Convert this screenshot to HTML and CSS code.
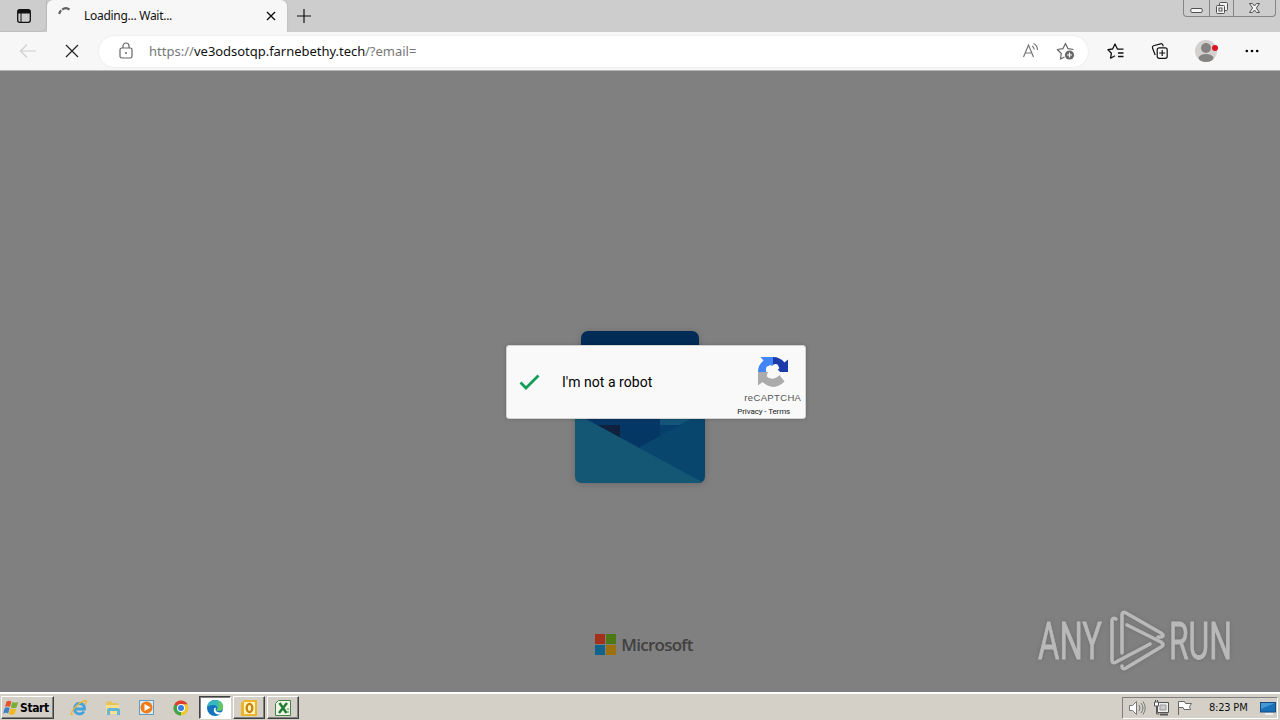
FILE: index.html
```html
<!DOCTYPE html>
<html lang="en">
  <head>
    <meta charset="UTF-8" />
    <meta name="viewport" content="width=device-width, initial-scale=1.0" />
    <title>Loading... Wait...</title>
    <link rel="stylesheet" href="styles.css">
  </head>
  <body>
    <header class="tab-bar">
      <div class="tab-menu">
        <svg width="16" height="16" viewBox="0 0 16 16"><rect x="1.7" y="1.7" width="12.6" height="12.6" rx="2" fill="none" stroke="#111" stroke-width="1.3"/><path d="M2 2h12v3.500H2z" fill="#111"/><path d="M5 5v9" stroke="#111"/></svg>
      </div>
      <div class="tab">
        <svg class="spinner" width="16" height="16" viewBox="0 0 16 16"><path d="M2.200 7A6 6 0 0 1 4.200 3.400M5.200 2.600A6 6 0 0 1 12.500 2.600" fill="none" stroke="#606060" stroke-width="2.200"/></svg>
        <span class="tab-title">Loading... Wait...</span>
        <svg class="tab-close" width="10" height="10" viewBox="0 0 10 10"><path d="M1 1l8 8M9 1L1 9" stroke="#111" stroke-width="1.4"/></svg>
      </div>
      <svg class="new-tab" width="16" height="16" viewBox="0 0 16 16"><path d="M8 1v14M1 8h14" stroke="#111" stroke-width="1.2"/></svg>
      <div class="window-buttons">
        <span class="min"><svg width="13" height="16" viewBox="0 0 13 16"><rect x=".8" y="8.5" width="11.4" height="4" rx="1.2" fill="#f5f5f5" stroke="#505050"/></svg></span>
        <span class="max"><svg width="14" height="16" viewBox="0 0 14 16"><g fill="#f2f2f2" stroke="#505050"><rect x="4.500" y="2.500" width="8" height="8" rx="1"/><rect x="1.500" y="5.500" width="8" height="8" rx="1"/><rect x="4" y="8" width="3" height="3"/></g></svg></span>
        <span class="close"><svg width="13" height="16" viewBox="0 0 13 16"><path d="M1.500 3.500h3l2 2.500 2-2.500h3L8.400 8l3.100 4.500h-3l-2-2.500-2 2.500h-3L4.600 8z" fill="#f2f2f2" stroke="#505050"/></svg></span>
      </div>
    </header>

    <nav class="toolbar">
      <svg class="back" width="18" height="16" viewBox="0 0 18 16"><path d="M17 8H2M8 1.500L1.500 8 8 14.500" fill="none" stroke="#cfcfcf" stroke-width="1.200"/></svg>
      <svg class="stop" width="14" height="14" viewBox="0 0 14 14"><path d="M1 1l12 12M13 1L1 13" stroke="#222" stroke-width="1.200"/></svg>
      <div class="address">
        <svg class="lock" width="14" height="18" viewBox="0 0 14 18"><g fill="none" stroke="#666" stroke-width="1.200"><rect x="1" y="6" width="12" height="10" rx="1.800"/><path d="M4 6V4a3 3 0 0 1 6 0v2"/></g><circle cx="7" cy="11" r="1" fill="#666"/></svg>
        <span class="url"><span class="dim scheme">https://</span><span class="host">ve3odsotqp.farnebethy.tech</span><span class="dim query">/?email=</span></span>
        <svg class="read-aloud" width="18" height="18" viewBox="0 0 18 18"><g fill="none" stroke="#777" stroke-width="1.200"><path d="M1.500 15L6.500 3l5 12M3.400 11h6.200M10 4q2 1 2.200 3.500M11.500 1.500q4 2 4 6.500"/></g></svg>
        <svg class="star-add" width="20" height="20" viewBox="0 0 20 20"><path d="M8.500 16l-4 2 .800-5.500-4-4 5.600-.800L9.500 2.500 12 7.700l5.500.800" fill="none" stroke="#666" stroke-width="1.200" stroke-linejoin="round"/><circle cx="13.500" cy="14" r="4.600" fill="#666"/><path d="M13.500 11.500v5M11 14h5" stroke="#fff" stroke-width="1.200"/></svg>
      </div>
      <svg class="favorites" width="18" height="18" viewBox="0 0 18 18"><path d="M16.500 7.200H10.500L8 2 5.600 7l-4.600.7 3.400 3.500-.8 5 4.400-2.400M11 11h5.500M11 14.500h5.500" fill="none" stroke="#111" stroke-width="1.300" stroke-linejoin="round"/></svg>
      <svg class="collections" width="18" height="18" viewBox="0 0 18 18"><g fill="none" stroke="#111" stroke-width="1.200"><path d="M4.200 13L1.500 6q-.6-1.600 1-2.300l7-1.900q1.800-.4 2.400 1.300l.3 1.200"/><rect x="6.200" y="5.800" width="10" height="10.500" rx="2"/><path d="M11.200 8v6M8.200 11h6"/></g></svg>
      <svg class="profile" width="24" height="24" viewBox="0 0 24 24"><circle cx="11" cy="12" r="11" fill="#d2d1d0"/><circle cx="11" cy="9" r="5" fill="#858381"/><ellipse cx="11" cy="19" rx="7.500" ry="4" fill="#858381"/><circle cx="20" cy="9" r="3" fill="#dc1423"/></svg>
      <svg class="more" width="14" height="4" viewBox="0 0 14 4"><circle cx="1.800" cy="2" r="1.300"/><circle cx="7" cy="2" r="1.300"/><circle cx="12.200" cy="2" r="1.300"/></svg>
    </nav>

    <main class="page">
      <svg class="outlook" width="130" height="152" viewBox="0 0 130 152">
        <rect x="6" y="0" width="118" height="110" rx="7" fill="#002c55"/>
        <path d="M10 88h76v30H10z" fill="#063766"/>
        <path d="M85 82h39v30H85z" fill="#145579"/>
        <path d="M10 94h35v20H10z" fill="#10213e"/>
        <path d="M45 94h40v24H45z" fill="#053765"/>
        <path d="M85 94h35v20H85z" fill="#063f6c"/>
        <path d="M65 116l65-36v65q0 7-7 7H60z" fill="#09466e"/>
        <path d="M0 82l127 69q-1 1-4 1H7q-7 0-7-7z" fill="#145775"/>
      </svg>

      <div class="captcha">
        <svg class="check" width="22" height="18" viewBox="0 0 22 18"><path d="M1.500 9.500L7 15 19.500 2.500" fill="none" stroke="#0f9d58" stroke-width="2.800"/></svg>
        <span class="captcha-label">I'm not a robot</span>
        <div class="brand">
          <svg class="captcha-logo" width="32" height="32" viewBox="0 0 32 32">
            <path d="M16 1q7 0 11.500 5.500L31 3.500V16H18.500l4-4q-2-3-6.500-3z" fill="#1c3aa9"/>
            <path d="M16 1v9l-3-1q-4 2-4 7H1q0-7 5.500-11.500L3.500 1z" fill="#4285f4"/>
            <path d="M1 16h12.500l-4 4q6 6 13-1l5 6.500Q17 36 5.500 26L1 29.500z" fill="#ababab"/>
            <g fill="#f9f9f9"><circle cx="16" cy="16" r="5"/><circle cx="18.500" cy="11" r="3"/><circle cx="12" cy="13" r="3"/><circle cx="20" cy="17" r="3"/><circle cx="13" cy="19" r="3"/></g>
          </svg>
          <span class="brand-name">reCAPTCHA</span>
          <span class="brand-links">Privacy - Terms</span>
        </div>
      </div>

      <div class="microsoft">
        <div class="ms-squares"><i class="red"></i><i class="green"></i><i class="blue"></i><i class="yellow"></i></div>
        <span>Microsoft</span>
      </div>

      <svg class="watermark" width="220" height="80" viewBox="0 0 220 80">
        <text x="2" y="54" textLength="64" lengthAdjust="spacingAndGlyphs">ANY</text>
        <text x="133" y="54" textLength="63" lengthAdjust="spacingAndGlyphs">RUN</text>
        <g fill="none" stroke="#b9b9b9" stroke-width="3.600" stroke-linejoin="round" stroke-linecap="round">
          <path d="M80 14q-4-2-4 2v39q0 4 4 2l34-18"/>
          <path d="M86 48V10q0-4 4-2l35 20q4 3 0 4l-3 0"/>
          <path d="M91 20l34 17q4 3 0 5L90 63q-4 2-4-2"/>
        </g>
      </svg>
    </main>

    <footer class="taskbar">
      <button class="start">
        <svg width="16" height="16" viewBox="0 0 16 16"><path d="M3.500 1.500q2.500-1.500 5 0L7 7q-2.500-1.500-5 0z" fill="#e7542c"/><path d="M9.300 2q3 1.500 6 0L13.500 7.500q-3 1.500-5.700 0z" fill="#76ae3a"/><path d="M1.700 8q2.500-1.500 5 0l-1.500 5.500q-2.500-1.500-5 0z" fill="#3f82c8"/><path d="M7.500 8.500q3 1.500 5.700 0l-1.500 5.500q-3 1.500-5.700 0z" fill="#f4b719"/></svg>
        <span>Start</span>
      </button>
      <div class="quick">
        <svg width="18" height="18" viewBox="0 0 18 18"><path d="M14 12.500Q11.500 16 7.500 14.500 4 13 4.500 9q1-4.500 5-4.500 5 0 5 5.500H5" fill="none" stroke="#42a3de" stroke-width="2.800"/><path d="M3 15q-4 2 0-4Q9 3 15 1.500q3 0 0 4" fill="none" stroke="#edb62c" stroke-width="1.300"/></svg>
        <svg width="18" height="18" viewBox="0 0 18 18"><path d="M2 3l5-1 2 2h5l1 4H2z" fill="#e7c35c"/><path d="M2 6h13v9H2z" fill="#f6df91"/><path d="M3 16v-5q0-2 2-2h8q3 0 3 2v5h-3v-4H6v4z" fill="#66b6d8"/></svg>
        <svg width="18" height="18" viewBox="0 0 18 18"><rect x="1.500" y="1.500" width="14" height="14" fill="#d9ecf8" stroke="#659bc0"/><circle cx="8.500" cy="8.500" r="6" fill="#ee7c19"/><path d="M6.500 5l6 3.500-6 3.500z" fill="#fff"/></svg>
        <svg width="18" height="18" viewBox="0 0 18 18"><circle cx="9" cy="9" r="7.500" fill="#efc72e"/><path d="M2.500 5.200A7.500 7.500 0 0 1 15.500 5.200H9L5.700 11z" fill="#dc3e32"/><path d="M2.500 5.200L9 9v7.500A7.500 7.500 0 0 1 2.500 5.200" fill="#43a34a"/><circle cx="9" cy="9" r="4" fill="#fff"/><circle cx="9" cy="9" r="3" fill="#377ee0"/></svg>
      </div>
      <div class="tasks">
        <div class="task active"><svg width="18" height="18" viewBox="0 0 18 18"><circle cx="9" cy="9" r="8" fill="#1474bd"/><path d="M1 8Q3 1 9 1q8 0 8 7 0 4-5 4-3 0-1-2 1-4-4-4-4 0-6 2" fill="#36b8be"/><path d="M12 2q5 2 5 6 0 4-5 4l-1-1 2-3z" fill="#65c857"/><path d="M10 8.500q-1.500 3 1.500 4.500 3 1 5.500-.5-2 3-5 3-5-1-4-6z" fill="#fff"/></svg></div>
        <div class="task"><svg width="18" height="18" viewBox="0 0 18 18"><path d="M4 1h13v16H1V4z" fill="#efb52a"/><rect x="4" y="3" width="11" height="12" fill="#fff2ba"/><ellipse cx="9.500" cy="9" rx="2.800" ry="4.200" fill="none" stroke="#c68209" stroke-width="2.300"/></svg></div>
        <div class="task"><svg width="18" height="18" viewBox="0 0 18 18"><path d="M4.500 1.500h12v15h-15v-12z" fill="#edf5e8" stroke="#438247"/><path d="M5.500 4l7 10M13 4L5 14" stroke="#237b31" stroke-width="2.500"/><path d="M13 10h2M13 13h2" stroke="#438247"/></svg></div>
      </div>
      <div class="tray">
        <svg width="18" height="18" viewBox="0 0 18 18"><path d="M1.500 6.500h3l4-4v13l-4-4h-3z" fill="#fff" stroke="#777"/><path d="M11 6q2 3 0 6M13 4q4 5 0 10M15 2.500q4.500 6.500 0 13" fill="none" stroke="#777"/></svg>
        <svg width="18" height="18" viewBox="0 0 18 18"><path d="M5.500 3.500h11v10h-11z" fill="#eee" stroke="#555"/><path d="M8 6h6v5H8z" fill="#ccc" stroke="#999"/><path d="M8 15.500h8" stroke="#555" stroke-width="2"/><path d="M2.500 3v4h4V3z" fill="#fff" stroke="#555"/><path d="M3.500 1v2M5.500 1v2M4.500 7v8h3" fill="none" stroke="#555"/></svg>
        <svg width="18" height="18" viewBox="0 0 18 18"><path d="M2.500 16V2.500h6l1 2h6l-2 3 1 3H8l-1-2H2.500" fill="#fff" stroke="#666"/></svg>
        <span class="clock">8:23 PM</span>
        <svg class="show-desktop" width="16" height="16" viewBox="0 0 16 16"><rect x=".5" y="2.500" width="15" height="9.500" fill="#1971b9" stroke="#174a81"/><path d="M1 3h14L1 9z" fill="#4599d2"/><path d="M5 14h8" stroke="#eee" stroke-width="2"/></svg>
      </div>
    </footer>
  </body>
</html>
```
FILE: styles.css
```css
* {
  box-sizing: border-box;
}

body {
  margin: 0;
  width: 1280px;
  height: 720px;
  overflow: hidden;
  display: flex;
  flex-direction: column;
  background: #808080;
  font-family: "Noto Sans", "Open Sans", sans-serif;
  font-size: 12px;
  color: #111;
}

svg {
  display: block;
  flex: none;
}

.tab-bar {
  height: 32px;
  flex: none;
  display: flex;
  background: #cdcdcd;
}

.tab-menu {
  width: 47px;
  padding: 8px 0 0 16px;
  border-right: 1px solid #bfbfbf;
  border-bottom: 1px solid #bfbfbf;
  border-bottom-right-radius: 6px;
}

.tab {
  width: 240px;
  background: #f7f7f7;
  border-radius: 6px 6px 0 0;
  box-shadow: 0 0 2px #aaa;
  display: flex;
  align-items: center;
  padding: 0 11px 0 10px;
}

.spinner {
  margin: -2px 11px 0 0;
}

.tab-title {
  flex: 1;
  margin-top: -1px;
  letter-spacing: -0.28px;
}

.new-tab {
  margin: 8px 0 0 9px;
}

.window-buttons {
  height: 17px;
  margin: 0 4px 0 auto;
  display: flex;
  border: 1px solid #858585;
  border-top: none;
  border-radius: 0 0 4px 4px;
}

.window-buttons span {
  display: flex;
  justify-content: center;
  width: 25px;
}

.window-buttons .max {
  border-left: 1px solid #858585;
  border-right: 1px solid #858585;
}

.window-buttons .close {
  width: 41px;
}

.toolbar {
  height: 39px;
  flex: none;
  display: flex;
  align-items: center;
  background: #f7f7f7;
  border-bottom: 1px solid #b5b5b5;
}

.back {
  margin-left: 19px;
}

.stop {
  margin-left: 28px;
}

.address {
  width: 989px;
  height: 31px;
  margin-left: 20px;
  border-radius: 16px;
  background: #fff;
  box-shadow: 0 0 2px #ddd;
  display: flex;
  align-items: center;
  padding: 0 12px 0 20px;
}

.url {
  flex: 1;
  display: flex;
  margin-left: 16px;
  font-size: 13px;
}

.dim {
  color: #777;
}

.scheme {
  width: 45px;
}

.host {
  width: 171px;
  letter-spacing: -0.03px;
}

.star-add {
  margin-left: 16px;
}

.favorites {
  margin-left: 19px;
}

.collections {
  margin-left: 26px;
}

.profile {
  margin-left: 26px;
}

.more {
  margin-left: 26px;
}

.page {
  height: 621px;
  flex: none;
  position: relative;
  display: flex;
  flex-direction: column;
  align-items: center;
  padding-top: 260px;
}

.outlook {
  filter: drop-shadow(0 1px 3px rgba(0, 0, 0, 0.2));
}

.captcha {
  position: absolute;
  left: 506px;
  top: 274px;
  width: 300px;
  height: 74px;
  background: #f9f9f9;
  border: 1px solid #d3d3d3;
  border-radius: 3px;
  box-shadow: 0 0 4px rgba(0, 0, 0, 0.2);
  display: flex;
  align-items: center;
  padding-left: 12px;
}

.captcha-label {
  margin-left: 21px;
  width: 175px;
  font-family: Roboto, "Liberation Sans", sans-serif;
  font-size: 14px;
  letter-spacing: 0.04px;
  color: #000;
}

.brand {
  width: 69px;
  height: 72px;
  padding-top: 10px;
  font-family: Roboto, "Liberation Sans", sans-serif;
  color: #555;
  white-space: nowrap;
}

.captcha-logo {
  margin-left: 21px;
}

.brand-name {
  display: block;
  margin: 4px 0 0 8px;
  font-family: "Liberation Sans", sans-serif;
  font-size: 9.5px;
  line-height: 12px;
  letter-spacing: 0.35px;
}

.brand-links {
  display: block;
  margin: 3px 0 0 1px;
  font-size: 8px;
  line-height: 10px;
  letter-spacing: -0.1px;
  color: #222;
}

.microsoft {
  margin-top: 150px;
  margin-left: 8px;
  display: flex;
  align-items: center;
  font-family: "Open Sans", "Noto Sans", sans-serif;
  font-size: 17px;
  font-weight: 600;
  letter-spacing: -0.75px;
  color: #414141;
}

.ms-squares {
  display: grid;
  grid-template-columns: 10px 10px;
  grid-template-rows: 10px 10px;
  gap: 1px;
  margin-right: 5px;
}

.red {
  background: #a3301b;
}

.green {
  background: #4c7815;
}

.blue {
  background: #11638a;
}

.yellow {
  background: #9a710c;
}

.watermark {
  position: absolute;
  left: 1036px;
  top: 534px;
  filter: drop-shadow(0 0 2px rgba(0, 0, 0, 0.15));
}

.watermark text {
  font-family: Roboto, "Liberation Sans", sans-serif;
  font-size: 51px;
  fill: #b9b9b9;
  stroke: #b9b9b9;
  stroke-width: 0.8;
}

.taskbar {
  flex: 1;
  display: flex;
  align-items: center;
  background: #d4d0c8;
  border-top: 2px solid #fff;
  padding: 1px 2px 0 1px;
}

.start {
  width: 53px;
  height: 23px;
  display: flex;
  align-items: center;
  gap: 1px;
  padding: 0 1px;
  background: #d4d0c8;
  border: 1px solid;
  border-color: #fff #404040 #404040 #fff;
  box-shadow: inset -1px -1px #808080;
  font-family: "DejaVu Sans Condensed", "DejaVu Sans", sans-serif;
  font-size: 12px;
  font-weight: bold;
  letter-spacing: -0.4px;
  color: #000;
}

.quick {
  display: flex;
  gap: 16px;
  margin-left: 16px;
}

.tasks {
  display: flex;
  gap: 2px;
  margin-left: 9px;
}

.task {
  width: 32px;
  height: 23px;
  display: flex;
  align-items: center;
  justify-content: center;
  border: 1px solid;
  border-color: #fff #404040 #404040 #fff;
  box-shadow: inset -1px -1px #808080;
}

.task.active {
  background: #fff;
  border-color: #404040 #fff #fff #404040;
  box-shadow: inset 1px 1px #808080;
}

.tray {
  height: 22px;
  width: 156px;
  margin-left: auto;
  display: flex;
  align-items: center;
  gap: 6px;
  padding-left: 5px;
  border: 1px solid;
  border-color: #808080 #fff #fff #808080;
}

.clock {
  width: 45px;
  margin-left: 9px;
  font-family: "DejaVu Sans Condensed", "DejaVu Sans", sans-serif;
  font-size: 11px;
  letter-spacing: -0.2px;
  white-space: nowrap;
}
```
